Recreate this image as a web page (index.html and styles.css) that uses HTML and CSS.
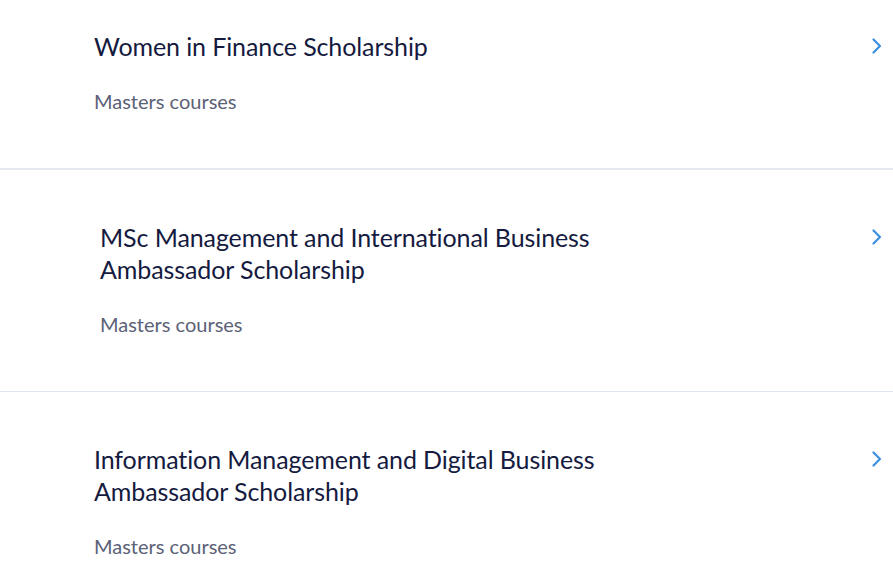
FILE: index.html
```html
<!DOCTYPE html>
<html lang="en">
<head>
<meta charset="utf-8">
<title>Scholarships</title>
<link rel="stylesheet" href="styles.css">
</head>
<body>
<ul class="list">
  <li class="item item--first">
    <div class="item__body">
      <h2 class="item__title">Women in Finance Scholarship</h2>
      <p class="item__meta">Masters courses</p>
    </div>
    <svg class="item__chevron" width="12" height="18" viewBox="0 0 12 18"><polyline points="2.5,2.5 9,9 2.5,15.5" fill="none" stroke="#3b8ee3" stroke-width="2.2" stroke-linecap="round" stroke-linejoin="round"/></svg>
  </li>
  <li class="item item--shift">
    <div class="item__body">
      <h2 class="item__title">MSc Management and International Business Ambassador Scholarship</h2>
      <p class="item__meta">Masters courses</p>
    </div>
    <svg class="item__chevron" width="12" height="18" viewBox="0 0 12 18"><polyline points="2.5,2.5 9,9 2.5,15.5" fill="none" stroke="#3b8ee3" stroke-width="2.2" stroke-linecap="round" stroke-linejoin="round"/></svg>
  </li>
  <li class="item item--last">
    <div class="item__body">
      <h2 class="item__title">Information Management and Digital Business Ambassador Scholarship</h2>
      <p class="item__meta">Masters courses</p>
    </div>
    <svg class="item__chevron" width="12" height="18" viewBox="0 0 12 18"><polyline points="2.5,2.5 9,9 2.5,15.5" fill="none" stroke="#3b8ee3" stroke-width="2.2" stroke-linecap="round" stroke-linejoin="round"/></svg>
  </li>
</ul>
</body>
</html>
```
FILE: styles.css
```css
html, body {
  margin: 0;
  padding: 0;
  background: #ffffff;
  height: 588px;
  overflow: hidden;
}
body {
  font-family: Lato, "Noto Sans", sans-serif;
}
.list {
  list-style: none;
  margin: 0;
  padding: 0;
}
.item {
  display: flex;
  align-items: flex-start;
  justify-content: space-between;
  padding: 51px 10px 53px 94px;
  border-bottom: 1px solid #dfe6f1;
}
.item--first {
  padding-top: 30px;
  border-bottom: 2px solid #e5e8ef;
}
.item--shift {
  padding-left: 100px;
}
.item--last {
  border-bottom: none;
}
.item__body {
  max-width: 560px;
}
.item__title {
  margin: 0;
  font-size: 25px;
  line-height: 32px;
  font-weight: 400;
  color: #151a40;
  letter-spacing: -0.1px;
}
.item__meta {
  margin: 25px 0 0;
  font-size: 20px;
  line-height: 28px;
  color: #5b6177;
}
.item__chevron {
  display: block;
  flex: none;
  margin-top: 7px;
}
```
